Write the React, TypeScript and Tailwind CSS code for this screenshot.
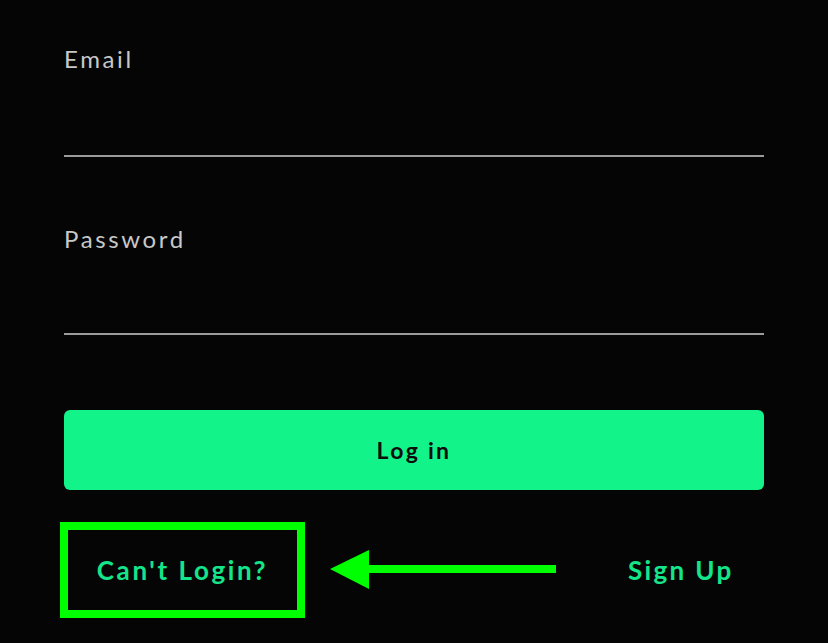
const font = { fontFamily: "Lato, 'Noto Sans', sans-serif" }

const Field = ({ label, type, first }: { label: string; type: string; first?: boolean }) => {
  return (
    <div className={first ? "" : "mt-[68px]"}>
      <label className="block text-[24px] font-normal leading-[28px] tracking-[0.11em] text-[#c8c8c8]">{label}</label>
      <input
        type={type}
        className={`block w-full bg-transparent outline-none border-b-2 border-[#9b9b9b] text-white ${first ? "h-[84px]" : "h-[82px]"}`}
      />
    </div>
  )
}

const App = () => {
  return (
    <main className="min-h-screen w-full bg-[#050505] px-[64px] pt-[45px]" style={font}>
      <form className="w-[700px]">
        <Field label="Email" type="email" first />
        <Field label="Password" type="password" />
        <button
          type="button"
          className="mt-[75px] h-[80px] w-full rounded-[6px] bg-[#12f48a] text-[23px] font-bold tracking-[0.1em] text-[#0d0d0d]"
        >
          Log in
        </button>
      </form>
      <div className="mt-[32px] flex items-center">
        <div className="-ml-[4px] flex h-[96px] w-[245px] items-center justify-center border-[8px] border-[#00ff00]">
          <a className="text-[26px] font-bold tracking-[0.1em] text-[#14e58a]">Can't Login?</a>
        </div>
        <svg width="226" height="40" viewBox="0 0 226 40" className="ml-[25px]">
          <polygon points="0,19 39,0 39,39" fill="#00ff00" />
          <rect x="38" y="15" width="188" height="8" fill="#00ff00" />
        </svg>
        <a className="ml-[72px] text-[26px] font-bold tracking-[0.09em] text-[#14e58a]">Sign Up</a>
      </div>
    </main>
  )
}

export default App
